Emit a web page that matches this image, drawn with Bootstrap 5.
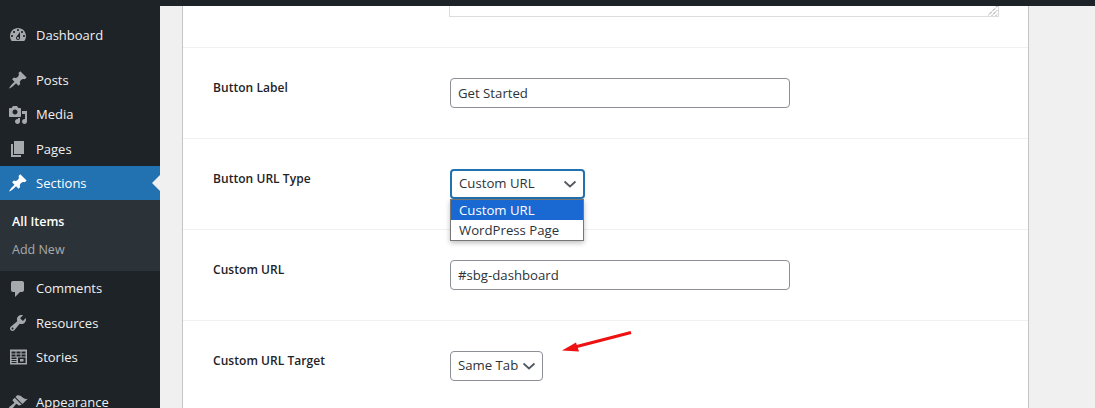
<!DOCTYPE html>
<html lang="en"><head><meta charset="utf-8"><title>Sections</title>
<link href="https://cdn.jsdelivr.net/npm/bootstrap@5.3.0/dist/css/bootstrap.min.css" rel="stylesheet">
<style>
html,body{height:408px;overflow:hidden}
body{background:#f0f0f1;font-family:"Open Sans","Noto Sans",sans-serif;font-size:13px;color:#1d2327}
.wp-top{height:6px;background:#1d2327}
.wp-shell{height:402px;overflow:hidden}
.wp-side{width:160px;flex:none;background:#1d2327;padding-top:12px}
.wp-item{height:34.3px;padding-left:8px;gap:8px;color:#f0f0f1;font-size:13px;position:relative}
.wp-item span{padding-top:.9px}
.wp-item svg{width:20px;height:20px;fill:#a7aaad;flex:none}
.wp-gap{height:11px}
.wp-cur{background:#2271b1;color:#fff}
.wp-cur svg{fill:#fff}
.wp-cur::after{content:"";position:absolute;right:0;top:9px;border:8px solid transparent;border-right-color:#f0f0f1;border-left:0}
.wp-sub{height:71px;background:#2c3338;padding:13px 12px 0;font-size:12.5px;color:#a7aaad}
.wp-sub div{height:28px}
.wp-sub .on{color:#fff;font-weight:600}
.wp-panel{width:847px;margin-left:22px;background:#fff;border-left:1px solid #c3c4c7;border-right:1px solid #c3c4c7;height:402px}
.wp-row{height:91px;padding:30px 0 0 30px;border-bottom:1px solid #f0f0f1;position:relative}
.wp-row.first{height:42px;padding:0 0 0 266px}
.wp-lab{width:237px;flex:none;font-weight:600;font-size:12px;line-height:18px;padding-top:1px;letter-spacing:.05px}
.wp-ta{width:550px;height:11px;border:1px solid #dcdcde;border-top:0;position:relative}
.wp-ta svg{position:absolute;right:0;bottom:0}
.wp-in,.wp-sel{font-family:inherit;font-size:13.2px;color:#2c3338;height:30px;border:1px solid #8c8f94;border-radius:4px;padding:0 7px;background-color:#fff;box-shadow:none}
.wp-in{width:340px}
.wp-sel{background-image:url("data:image/svg+xml,%3Csvg xmlns='http://www.w3.org/2000/svg' width='14' height='14' viewBox='0 0 14 14'%3E%3Cpath d='M1.500 4.500 7 9.500l5.500-5' fill='none' stroke='%2350575e' stroke-width='1.700'/%3E%3C/svg%3E");background-repeat:no-repeat;background-position:right 6px center;background-size:14px;padding-right:20px}
.wp-sel.open{width:135px;border:2px solid #2271b1;background-position:right 6px center;padding-left:7px}
.wp-sel.plain{width:93px}
.wp-menu{position:absolute;left:267px;top:60px;width:134px;background:#fff;border:1px solid #767676;box-shadow:0 2px 5px rgba(0,0,0,.25);font-size:13.2px;color:#2c3338;z-index:3}
.wp-menu div{height:20px;line-height:20px;padding-left:8px}
.wp-menu .sel{background:#1a68d2;color:#fff}
.wp-arrow{position:absolute;left:378px;top:10px;z-index:2}
</style></head><body>
<div class="wp-top"></div>
<div class="wp-shell d-flex">
<nav class="wp-side">
<div class="wp-item d-flex align-items-center"><svg viewBox="0 0 20 20"><path d="M3.76 16h12.48c1.1-1.37 1.76-3.11 1.76-5 0-4.42-3.58-8-8-8s-8 3.58-8 8c0 1.890.66 3.630 1.760 5zM10 4c.55 0 1 .45 1 1s-.45 1-1 1-1-.45-1-1 .45-1 1-1zM6 6c.55 0 1 .45 1 1s-.45 1-1 1-1-.45-1-1 .45-1 1-1zm8 0c.55 0 1 .45 1 1s-.45 1-1 1-1-.45-1-1 .45-1 1-1zm-5.370 5.550L12 7v6c0 1.100-.9 2-2 2s-2-.9-2-2c0-.57.24-1.080.63-1.450zM4 10c.55 0 1 .45 1 1s-.45 1-1 1-1-.45-1-1 .45-1 1-1zm12 0c.55 0 1 .45 1 1s-.45 1-1 1-1-.45-1-1 .45-1 1-1zm-5 3c0-.55-.45-1-1-1s-1 .45-1 1 .45 1 1 1 1-.45 1-1z" fill-rule="evenodd"/></svg><span>Dashboard</span></div>
<div class="wp-gap"></div>
<div class="wp-item d-flex align-items-center"><svg viewBox="0 0 20 20"><path d="M10.44 3.020l1.820-1.820 6.360 6.350-1.830 1.820c-1.050-.68-2.480-.57-3.410.36l-.75.75c-.92.930-1.040 2.350-.35 3.410l-1.830 1.820-2.410-2.410-2.800 2.790c-.42.42-3.380 2.710-3.800 2.290s1.860-3.390 2.280-3.810l2.790-2.790L4.100 9.360l1.830-1.820c1.050.69 2.480.57 3.400-.36l.75-.75c.93-.92 1.050-2.350.36-3.410z"/></svg><span>Posts</span></div>
<div class="wp-item d-flex align-items-center"><svg viewBox="0 0 20 20"><path d="M13 11V4c0-.55-.45-1-1-1h-1.670L9 1H5L3.670 3H2c-.55 0-1 .45-1 1v7c0 .55.45 1 1 1h10c.55 0 1-.45 1-1zM7 4.500c1.380 0 2.500 1.120 2.500 2.500S8.380 9.500 7 9.500 4.500 8.380 4.500 7 5.620 4.500 7 4.500zM14 6h5v10.500c0 1.380-1.120 2.500-2.500 2.500S14 17.880 14 16.500s1.120-2.500 2.500-2.500c.17 0 .34.020.5.050V9h-3V6zm-4 8.050V13h2v3.500c0 1.380-1.120 2.500-2.500 2.500S7 17.880 7 16.500 8.120 14 9.500 14c.17 0 .34.020.5.050z"/></svg><span>Media</span></div>
<div class="wp-item d-flex align-items-center"><svg viewBox="0 0 20 20"><path d="M6 15V2h10v13H6zm-1 1h8v2H3V5h2v11z"/></svg><span>Pages</span></div>
<div class="wp-item wp-cur d-flex align-items-center"><svg viewBox="0 0 20 20"><path d="M10.44 3.020l1.820-1.820 6.360 6.350-1.830 1.820c-1.050-.68-2.480-.57-3.410.36l-.75.75c-.92.930-1.040 2.350-.35 3.410l-1.830 1.820-2.410-2.410-2.800 2.790c-.42.42-3.380 2.710-3.800 2.290s1.860-3.390 2.280-3.810l2.790-2.790L4.100 9.360l1.830-1.820c1.050.69 2.480.57 3.400-.36l.75-.75c.93-.92 1.050-2.350.36-3.410z"/></svg><span>Sections</span></div>
<div class="wp-sub"><div class="on">All Items</div><div>Add New</div></div>
<div class="wp-item d-flex align-items-center"><svg viewBox="0 0 20 20"><path d="M5 2h9c1.100 0 2 .9 2 2v7c0 1.100-.9 2-2 2h-2l-5 5v-5H5c-1.100 0-2-.9-2-2V4c0-1.100.9-2 2-2z"/></svg><span>Comments</span></div>
<div class="wp-item d-flex align-items-center"><svg viewBox="0 0 20 20"><path d="M16.680 9.770c-1.340 1.340-3.300 1.670-4.950.99l-5.410 6.520c-.99.99-2.590.99-3.580 0s-.99-2.590 0-3.570l6.520-5.420c-.68-1.650-.35-3.610.99-4.950 1.280-1.280 3.120-1.620 4.720-1.060l-2.890 2.890 2.820 2.820 2.860-2.870c.53 1.580.18 3.390-1.080 4.650zM3.810 16.210c.4.39 1.040.39 1.430 0 .4-.4.4-1.040 0-1.430-.39-.4-1.030-.4-1.430 0-.39.39-.39 1.030 0 1.430z"/></svg><span>Resources</span></div>
<div class="wp-item d-flex align-items-center"><svg viewBox="0 0 20 20"><path fill-rule="evenodd" d="M2 2.500h17v15H2zM3.500 6.500h4v-2h-4zM8.500 6.500h4v-2h-4zM13.500 6.500h4v-2h-4zM3.500 9.500h4v-2h-4zM8.500 9.500h4v-2h-4zM13.500 9.500h4v-2h-4zM3.500 12h5v-1.500h-5zM3.500 14h5v-1h-5zM3.500 16h5v-1h-5zM10 16h7.500v-5.500H10zM12 14.500h3.500V12H12z"/></svg><span>Stories</span></div>
<div class="wp-gap"></div>
<div class="wp-item d-flex align-items-center"><svg viewBox="0 0 20 20"><path d="M14.480 11.060L7.410 3.990l1.500-1.500c.5-.56 2.300-.47 3.510.32 1.210.8 1.430 1.280 2.910 2.100 1.180.64 2.450 1.260 4.450.85zm-.71.71L6.700 4.700 4.930 6.470c-.39.39-.39 1.020 0 1.410l1.060 1.060c.39.39.39 1.030 0 1.420-.6.6-1.430 1.110-2.210 1.690-.35.26-.7.53-1.010.84C1.430 13.230.4 14.980 1.300 15.880c.9.9 2.640-.13 3.980-1.470.31-.31.58-.66.85-1.010.58-.78 1.080-1.610 1.690-2.210.39-.39 1.020-.39 1.410 0l1.060 1.060c.39.39 1.020.39 1.410 0z"/></svg><span>Appearance</span></div>
</nav>
<main class="wp-panel">
<div class="wp-row first"><div class="wp-ta"><svg width="10" height="10" viewBox="0 0 10 10"><path d="M0 9.500 9.500 0M4 9.500 9.500 4M8 9.500 9.500 8" stroke="#555" stroke-width="1" stroke-dasharray="1 1" fill="none"/></svg></div></div>
<div class="wp-row d-flex"><div class="wp-lab">Button Label</div><input class="wp-in" value="Get Started"></div>
<div class="wp-row d-flex"><div class="wp-lab">Button URL Type</div><select class="form-select wp-sel open"><option>Custom URL</option><option>WordPress Page</option></select>
<div class="wp-menu"><div class="sel">Custom URL</div><div>WordPress Page</div></div></div>
<div class="wp-row d-flex"><div class="wp-lab">Custom URL</div><input class="wp-in" value="#sbg-dashboard"></div>
<div class="wp-row d-flex"><div class="wp-lab">Custom URL Target</div><select class="form-select wp-sel plain"><option>Same Tab</option><option>New Tab</option></select>
<svg class="wp-arrow" width="72" height="24" viewBox="0 0 72 24"><path d="M70 1.500 12 16.500" stroke="#ee1111" stroke-width="3" fill="none"/><path d="M1 19.500 15 11.500l3 9z" fill="#ee1111"/></svg></div>
</main>
</div>
</body></html>
